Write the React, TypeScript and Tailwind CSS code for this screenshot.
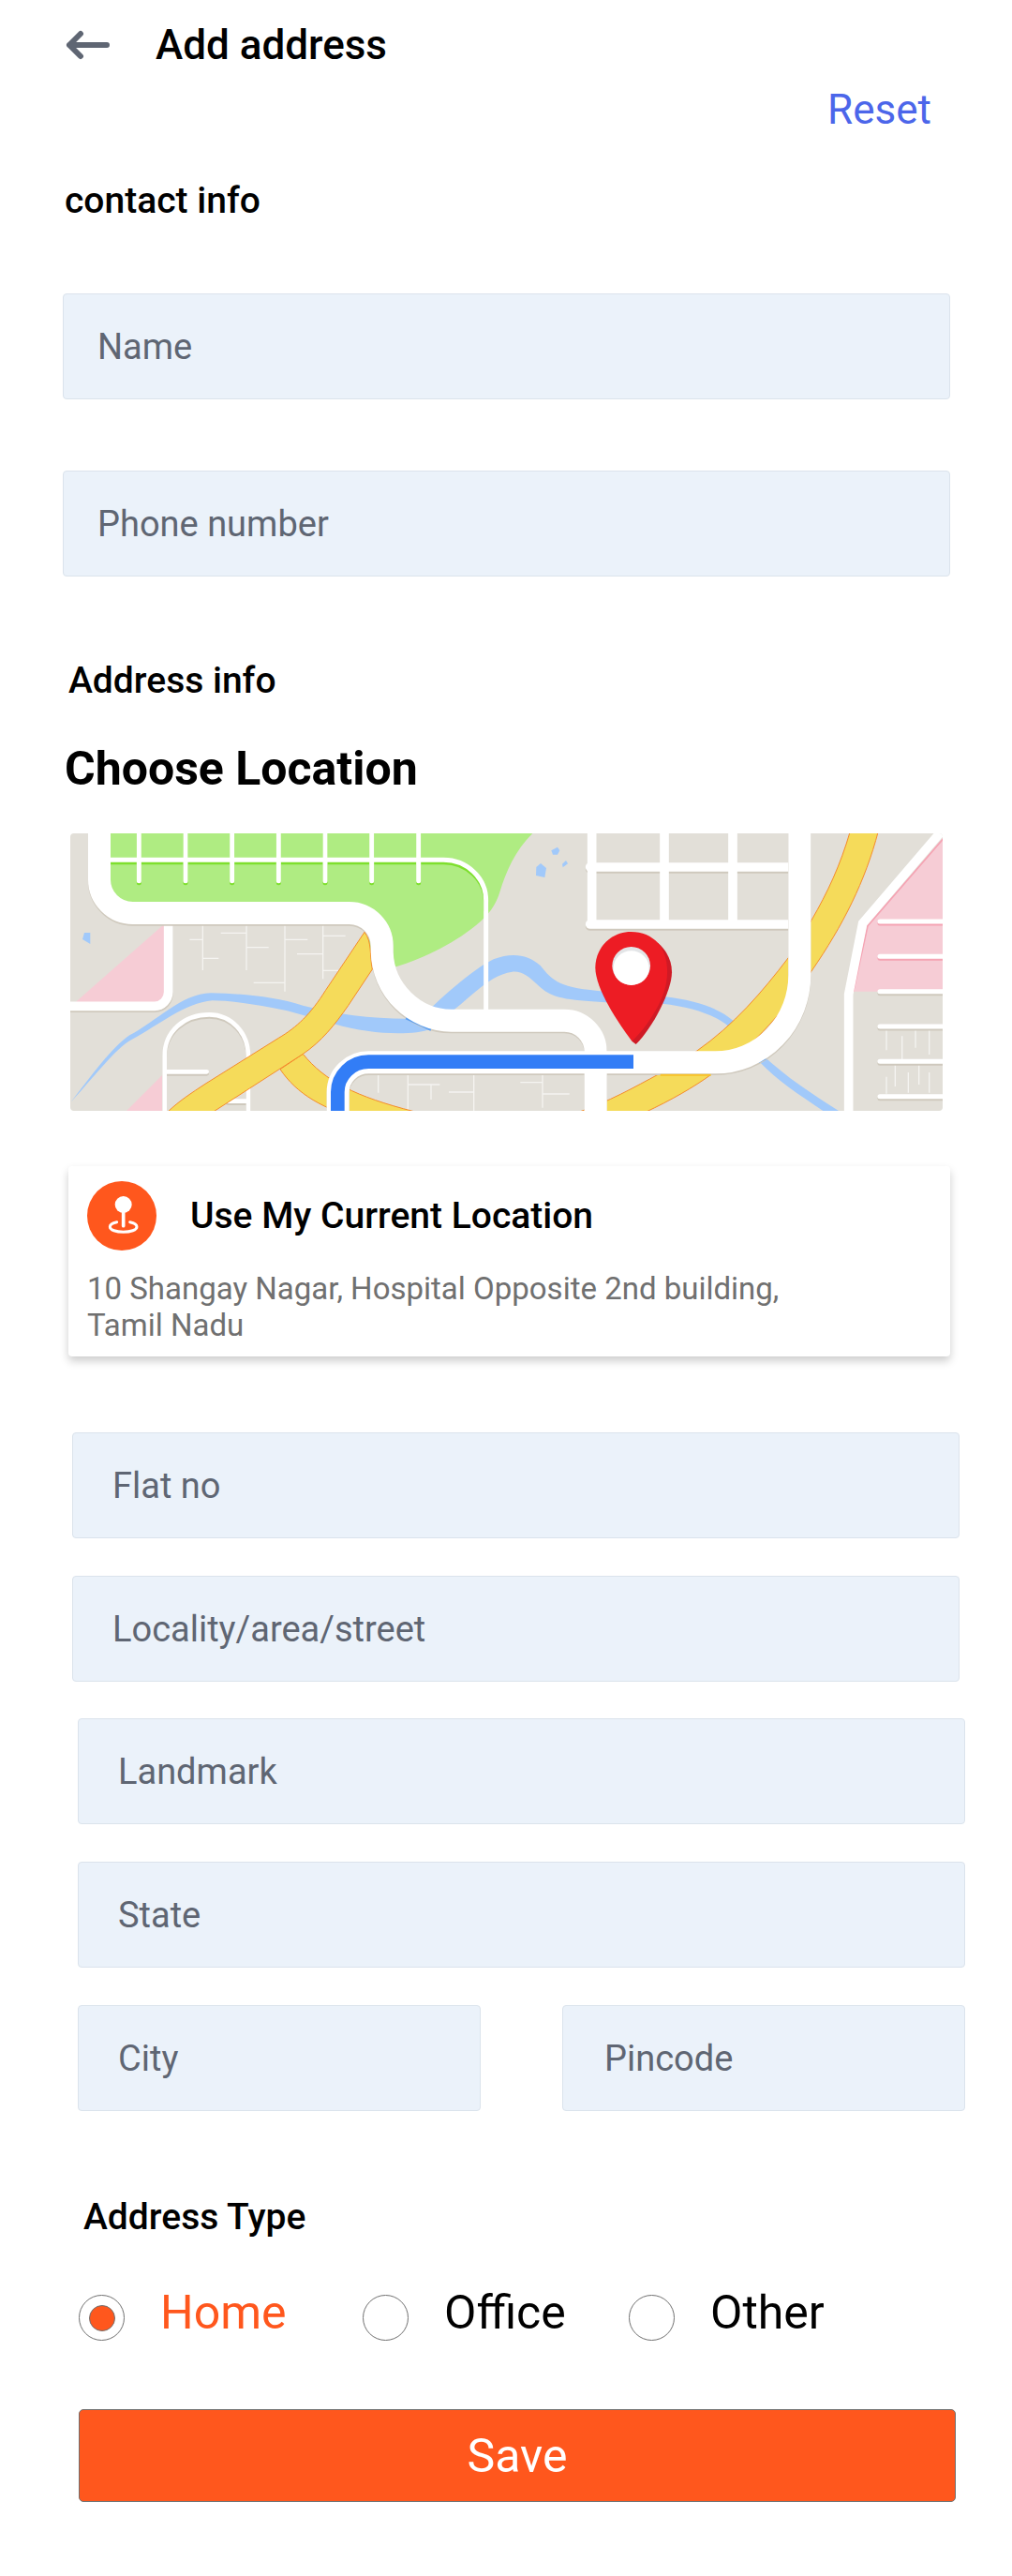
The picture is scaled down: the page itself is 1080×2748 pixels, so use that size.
import { useState } from "react";

const thinLines =
  "M469 348V495M427 397H469M469 457H520M609 348V495M527 376H609M609 422H680M732 348V563M732 397H805M632 535H732M854 348V523M854 385H926M771 443H854M854 496H905M1031 830V887M1126 825V945M1126 861H1228M1200 861V909M1257 885H1337M1337 825V945M1486 854H1557M1557 825V935M1557 891H1643M2658 686V751M2708 706V780M2751 686V743M2795 682V765M2686 794V867M2762 794V861M2658 836V890M2728 822V887M2795 822V887";
const boulevard =
  "M138 40V205A107 107 0 0 0 245 312H938A105 105 0 0 1 1043 417V430C1043 560 1150 656 1265 656H1627A100 100 0 0 1 1727 756V960";
const avenue = "M902 960V885A98 95 0 0 1 1000 790H2110A270 280 0 0 0 2380 510V40";
const route = "M901 960V885A99 97 0 0 1 1000 788H1848";
const parkLane = "M174 142H1240A136 130 0 0 1 1376 272V300";
const parkStubs = "M265 40V209M414 40V209M563 40V209M712 40V209M861 40V209M1010 40V209M1160 40V209";
const arch = "M347 960V770C347 690 410 637 490 637C560 637 615 695 615 770V960";
const blocks = "M1709 165H2360M1709 348H2360";

function LocationMap() {
  return (
    <svg
      viewBox="45 57 2793 888"
      className="block h-auto w-full rounded"
      role="img"
      aria-label="Map with the selected location"
      fill="none"
    >
      <rect x="45" y="57" width="2793" height="888" fill="#e2dfd8" />
      <path
        d="M174 40H1540L1525 57C1470 110 1440 180 1420 245C1406 290 1380 325 1330 362C1260 415 1180 455 1088 484L1000 430V300H174Z"
        fill="#afec82"
      />
      <g fill="#f6ccd5">
        <path d="M62 597L345 348V597Z" />
        <path d="M225 945L340 830V945Z" />
        <path d="M2840 70L2598 355L2552 563H2840Z" />
      </g>
      <g fill="#a1c9fa">
        <path d="M90 375H109V411L84 396Z" />
        <path d="M1585 112L1605 101L1612 112L1605 125H1590Z" />
        <path d="M1537 165L1551 153L1569 168L1564 198L1536 192Z" />
        <path d="M1632 144L1638 154L1622 166L1620 155Z" />
        <path d="M47 917C110 835 180 740 235 703C320 660 400 570 495 568C600 570 700 580 790 608C900 635 1000 650 1125 650L1208 608C1270 550 1340 490 1400 460C1460 437 1510 445 1550 480C1590 530 1610 552 1760 563L1950 580C2040 590 2120 615 2165 655L2260 765C2340 840 2420 890 2505 945H2455C2380 895 2310 850 2250 787L2145 668C2100 635 2030 612 1940 602L1760 598C1630 590 1590 585 1550 550C1510 512 1490 497 1460 500C1390 510 1340 570 1275 620L1200 683C1140 705 1010 702 890 667L740 625C650 605 560 592 500 592C410 600 330 670 240 718C190 745 110 850 47 917Z" />
      </g>
      <path d={thinLines} stroke="#f5f4f1" strokeWidth="4" />

      <g stroke="#7edf2d" strokeWidth="15" strokeLinecap="round">
        <path d={parkLane} transform="translate(0 7)" strokeLinecap="butt" />
        <path d={parkStubs} transform="translate(0 6)" />
      </g>
      <path d="M1376 300V640" stroke="#fff" strokeWidth="15" />
      <g stroke="#fff" strokeWidth="15" strokeLinecap="round">
        <path d={parkLane} strokeLinecap="butt" />
        <path d={parkStubs} />
      </g>

      <g stroke="#cfc9bd">
        <path d="M359 330V565A44 44 0 0 1 315 616H45" strokeWidth="28" />
        <path d={arch} strokeWidth="14" transform="translate(0 6)" />
        <path d="M350 826H482M550 920H610" strokeWidth="14" strokeLinecap="round" />
        <path d={blocks} strokeWidth="29" strokeLinecap="round" transform="translate(0 6)" />
        <path
          d="M2637 569H2860M2637 681H2860M2637 793H2860M2637 905H2860"
          strokeWidth="15"
          strokeLinecap="round"
        />
        <path d="M2637 345H2860M2637 457H2860" stroke="#f5a3b3" strokeWidth="15" strokeLinecap="round" />
        <path d="M2842 72L2598 353L2552 563" stroke="#f5a3b3" strokeWidth="5" />
      </g>
      <g stroke="#fff">
        <path d="M359 330V565A45 45 0 0 1 315 610H45" strokeWidth="29" />
        <path d={arch} strokeWidth="14" />
        <path d="M350 820H482M550 914H610" strokeWidth="14" strokeLinecap="round" />
        <path d={blocks} strokeWidth="29" strokeLinecap="round" />
        <path d="M1715 40V348M1947 40V348M2166 40V348" strokeWidth="29" />
        <path d="M2850 32L2582 345L2537 572V960" strokeWidth="29" />
        <path
          d="M2637 339H2860M2637 451H2860M2637 563H2860M2637 675H2860M2637 787H2860M2637 899H2860"
          strokeWidth="15"
          strokeLinecap="round"
        />
      </g>

      <g fill="#f5db5a" stroke="#f58b2a" strokeWidth="3">
        <path d="M790 763C860 850 960 900 1145 947L1000 980C850 940 770 890 717 812Z" />
        <path d="M1670 950C1770 915 1850 870 1930 827C1970 805 2015 780 2050 754C2170 670 2260 565 2344 455L2418 335C2470 245 2510 160 2542 50H2632C2590 210 2520 350 2418 498C2320 640 2210 760 2098 828C2040 870 1970 910 1885 950Z" />
      </g>

      <g stroke="#cfc9bd" strokeWidth="72">
        <path d={boulevard} transform="translate(0 5)" />
        <path d={avenue} transform="translate(0 5)" />
      </g>
      <path d="M1120 648L1200 685M2248 787L2271 776" stroke="#5a9ff2" strokeWidth="9" />
      <path d="M1934 830H2096" stroke="#f7c12a" strokeWidth="6" />
      <path
        d="M987 373L862 560C815 635 770 678 712 712L480 857C430 890 395 912 355 950H500L790 763C850 722 890 672 935 608L1012 492C1003 450 1012 405 987 373Z"
        fill="#f5db5a"
        stroke="#f58b2a"
        strokeWidth="3"
      />
      <g stroke="#fff" strokeWidth="72">
        <path d={boulevard} />
        <path d={avenue} />
      </g>
      <path d={route} stroke="#327df6" strokeWidth="44" />

      <g transform="translate(1440 0)">
        <path
          d="M487 408C515 432 531 465 531 502C531 560 470 680 416 732L403 722L440 450Z"
          fill="#cf1a25"
        />
        <path
          d="M400 372C436 372 465 385 487 408C522 450 522 515 506 565C488 620 440 690 403 722C360 665 286 555 286 487C286 424 335 372 400 372Z"
          fill="#ed1c24"
        />
        <circle cx="401" cy="481" r="61" fill="#e3e5e7" />
        <ellipse cx="401" cy="488" rx="57" ry="55" fill="#fff" />
      </g>
    </svg>
  );
}

function BackArrow() {
  return (
    <svg
      viewBox="0 0 48 32"
      className="h-8 w-12"
      fill="none"
      stroke="#5f6673"
      strokeWidth="6"
      strokeLinecap="round"
      strokeLinejoin="round"
      aria-hidden="true"
    >
      <path d="M44 16H4M16 4L4 16L16 28" />
    </svg>
  );
}

function LocationIcon() {
  return (
    <svg viewBox="69 59 222 222" className="size-[74px] shrink-0" fill="none" aria-hidden="true">
      <circle cx="180" cy="170" r="111" fill="#ff571d" />
      <circle cx="185" cy="134" r="27" fill="#fff" />
      <path d="M185 150V202" stroke="#fff" strokeWidth="11" strokeLinecap="round" />
      <path
        d="M164 190C150 193 142 199 142 205C142 215 162 222 185 222C208 222 228 215 228 205C228 199 220 193 206 190"
        stroke="#fff"
        strokeWidth="9"
        strokeLinecap="round"
      />
    </svg>
  );
}

function Field({ label, type = "text", padding = "px-[42px]" }: { label: string; type?: string; padding?: string }) {
  return (
    <input
      type={type}
      aria-label={label}
      placeholder={label}
      className={`block h-[113px] w-full min-w-0 rounded border border-[#dbe3ec] bg-[#ebf2fa] text-[38px] text-black placeholder:text-[#5f6673] placeholder:opacity-100 ${padding}`}
    />
  );
}

const addressTypes = ["Home", "Office", "Other"];

export default function App() {
  const [addressType, setAddressType] = useState("Home");

  return (
    <main className="min-h-screen bg-white pb-20 font-['Roboto',sans-serif] text-black">
      <header className="flex h-[95px] items-center gap-12 px-[70px]">
        <button type="button" aria-label="Back">
          <BackArrow />
        </button>
        <h1 className="text-[44px] leading-[48px] font-medium">Add address</h1>
      </header>

      <form onSubmit={(event) => event.preventDefault()}>
        <div className="flex justify-end pr-[86px]">
          <button type="reset" className="text-[44px] leading-[44px] text-[#4c66ea]">
            Reset
          </button>
        </div>

        <section className="mt-[51px] pr-[66px] pl-[67px]">
          <h2 className="pl-0.5 text-[39px] leading-[48px] font-medium">contact info</h2>
          <div className="mt-[75px] flex flex-col gap-[76px]">
            <Field label="Name" padding="px-9" />
            <Field label="Phone number" type="tel" padding="px-9" />
          </div>
        </section>

        <section className="mt-[87px] pr-[66px] pl-[73px]">
          <h2 className="text-[39px] leading-[48px] font-medium">Address info</h2>
          <h3 className="mt-10 -ml-1 text-[50px] leading-[60px] font-bold">Choose Location</h3>
          <div className="mt-[39px] pr-2 pl-0.5">
            <LocationMap />
          </div>

          <div className="mt-[59px] rounded bg-white px-5 pt-4 pb-3.5 shadow-[0_5px_10px_rgba(0,0,0,0.2)]">
            <button type="button" className="flex items-center gap-9 text-[39px] leading-[48px] font-medium">
              <LocationIcon />
              Use My Current Location
            </button>
            <p className="mt-[21px] max-w-[760px] text-[33px] leading-[39px] text-[#707070]">
              10 Shangay Nagar, Hospital Opposite 2nd building, Tamil Nadu
            </p>
          </div>
        </section>

        <section className="mt-[81px] flex flex-col gap-[39px]">
          <div className="flex flex-col gap-10 pr-14 pl-[77px]">
            <Field label="Flat no" />
            <Field label="Locality/area/street" />
          </div>
          <div className="flex flex-col gap-10 pr-[50px] pl-[83px]">
            <Field label="Landmark" />
            <Field label="State" />
            <div className="grid grid-cols-2 gap-[87px]">
              <Field label="City" />
              <Field label="Pincode" padding="px-11" />
            </div>
          </div>
        </section>

        <fieldset className="mt-[89px] pr-[60px] pl-[84px]">
          <legend className="pl-[5px] text-[39px] leading-[48px] font-medium">Address Type</legend>
          <div className="mt-[59px] grid grid-cols-[303px_284px_auto]">
            {addressTypes.map((name) => (
              <label key={name} className="flex items-center gap-[38px]">
                <input
                  type="radio"
                  name="address-type"
                  value={name}
                  checked={addressType === name}
                  onChange={() => setAddressType(name)}
                  className="peer grid size-[49px] shrink-0 appearance-none place-content-center rounded-full border border-[#707070] bg-white checked:before:size-7 checked:before:rounded-full checked:before:border checked:before:border-[#707070] checked:before:bg-[#ff571d] checked:before:content-['']"
                />
                <span className="-mt-3 text-[50px] leading-[48px] peer-checked:text-[#ff571d]">{name}</span>
              </label>
            ))}
          </div>
          <button
            type="submit"
            className="mt-[73px] block h-[99px] w-full rounded-[5px] border border-[#707070] bg-[#ff571d] text-[50px] leading-[60px] text-white"
          >
            Save
          </button>
        </fieldset>
      </form>
    </main>
  );
}
